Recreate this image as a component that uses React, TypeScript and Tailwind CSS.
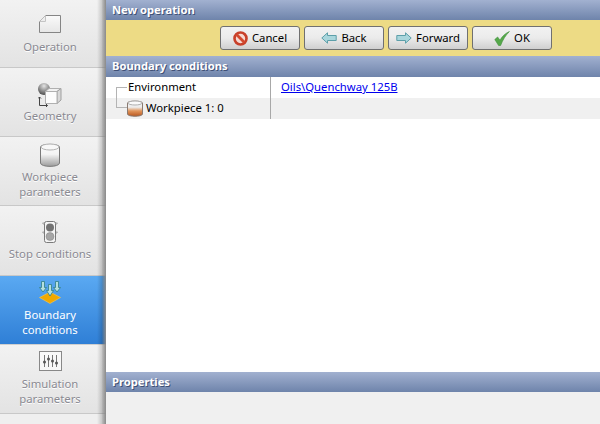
import React from 'react';

const font = { fontFamily: '"Noto Sans", "Liberation Sans", sans-serif' };

const OperationIcon = () => (
  <svg width="22" height="18" viewBox="0 0 22 18" className="block">
    <defs>
      <linearGradient id="sheet" x1="0" y1="0" x2="0" y2="1">
        <stop offset="0" stopColor="#fafafa" />
        <stop offset="1" stopColor="#e6e6e6" />
      </linearGradient>
    </defs>
    <path d="M6.5 0.5H21.5V17.5H0.5V6.5Z" fill="url(#sheet)" stroke="#858585" />
    <path d="M0.5 6.5H6.5V0.5" fill="#ededed" stroke="#c4c4c4" />
  </svg>
);

const GeometryIcon = () => (
  <svg width="24" height="24" viewBox="0 0 24 24" className="block">
    <defs>
      <radialGradient id="ball" cx="0.5" cy="0.25" r="0.75">
        <stop offset="0" stopColor="#e4e4e4" />
        <stop offset="1" stopColor="#4c4c4c" />
      </radialGradient>
    </defs>
    <circle cx="6" cy="6" r="6" fill="url(#ball)" />
    <path d="M7.5 8.5L11 5.5H23L19 8.5Z" fill="#f2f2f2" stroke="#b0b0b0" strokeLinejoin="round" />
    <path d="M19 8.5L23 5.5V17L19 20.5Z" fill="#d8d8d8" stroke="#a0a0a0" strokeLinejoin="round" />
    <rect x="7.5" y="8.5" width="11.5" height="12" fill="#fcfcfc" stroke="#b0b0b0" />
    <path d="M1.5 14V22.5H9.5M0 15.5L1.5 14L3 15.5M8 21L9.5 22.5L8 24" stroke="#444" fill="none" />
  </svg>
);

const WorkpieceIcon = () => (
  <svg width="20" height="24" viewBox="0 0 20 24" className="block">
    <defs>
      <linearGradient id="cyl" x1="0" y1="0" x2="0" y2="1">
        <stop offset="0" stopColor="#fafafa" />
        <stop offset="0.45" stopColor="#f4f4f4" />
        <stop offset="1" stopColor="#9c9c9c" />
      </linearGradient>
    </defs>
    <path d="M0.5 4C0.5 0.5 19.5 0.5 19.5 4V20C19.5 24.5 0.5 24.5 0.5 20Z" fill="url(#cyl)" stroke="#7a7a7a" />
    <ellipse cx="10" cy="4" rx="9" ry="3" fill="#f8f8f8" stroke="#b4b4b4" />
  </svg>
);

const TrafficIcon = () => (
  <svg width="16" height="22" viewBox="0 0 16 22" className="block">
    <path d="M0.5 2H3V4.5ZM15.5 2H13V4.5ZM0.5 11H3V13.5ZM15.5 11H13V13.5Z" fill="#eeeeee" stroke="#8a8a8a" strokeWidth="0.7" />
    <rect x="2.5" y="0.5" width="11" height="21" rx="2" fill="#f4f4f4" stroke="#7a7a7a" />
    <circle cx="8" cy="6.5" r="4" fill="#737373" />
    <circle cx="8" cy="15.5" r="4" fill="#a6a6a6" stroke="#808080" strokeWidth="0.5" />
  </svg>
);

const BoundaryIcon = () => (
  <svg width="22" height="23" viewBox="0 0 22 23" className="block">
    <path d="M0.5 16.5L11 11L21.5 16.5L11 22.5Z" fill="#f2a900" stroke="#f8cb55" strokeWidth="0.6" />
    <g fill="#b5e0df" stroke="#2f7f86" strokeWidth="0.8">
      <path d="M2.5 0.5H5.5V6.5H7.5L4 11L0.5 6.5H2.5Z" />
      <path d="M9.5 3.5H12.5V9.5H14.5L11 15L7.5 9.5H9.5Z" />
      <path d="M16.5 0.5H19.5V6.5H21.5L18 11L14.5 6.5H16.5Z" />
    </g>
  </svg>
);

const SimulationIcon = () => (
  <svg width="23" height="20" viewBox="0 0 23 20" className="block">
    <rect x="0.5" y="0.5" width="22" height="19" fill="#f8f8f8" stroke="#888888" />
    <path d="M5.5 4V16M9.5 4V16M13.5 4V16M17.5 4V16" stroke="#777777" />
    <g fill="#555555">
      <circle cx="5.5" cy="11" r="1.5" />
      <circle cx="9.5" cy="8" r="1.5" />
      <circle cx="13.5" cy="10" r="1.5" />
      <circle cx="17.5" cy="12" r="1.5" />
    </g>
  </svg>
);

const CancelIcon = () => (
  <svg width="15" height="15" viewBox="0 0 16 16" className="block">
    <circle cx="8" cy="8" r="6.4" fill="#f6d9d2" stroke="#c8402a" strokeWidth="2.8" />
    <path d="M3.8 3.8L12.2 12.2" stroke="#d2492f" strokeWidth="3" />
  </svg>
);

const ArrowIcon = ({ flip }: { flip?: boolean }) => (
  <svg width="16" height="12" viewBox="0 0 16 12" className={flip ? 'block scale-x-[-1]' : 'block'}>
    <path d="M0.8 6L6.5 0.8V3.5H15.2V8.5H6.5V11.2Z" fill="#a9d6dc" stroke="#5d9fa9" />
  </svg>
);

const CheckIcon = () => (
  <svg width="16" height="15" viewBox="0 0 16 15" className="block">
    <path d="M0.8 8.5L3.6 6L6 9.2C8 5.5 11 2.5 15.4 0.5C11.5 4.5 8.8 8.8 6.6 14.5H4.6Z" fill="#55a84a" stroke="#3f8f3a" strokeWidth="0.6" />
  </svg>
);

const navItems = [
  { label: ['Operation'], icon: <OperationIcon />, h: 'h-[68px]', top: 'pt-[15px]', gap: 'mt-[6px]' },
  { label: ['Geometry'], icon: <GeometryIcon />, h: 'h-[69px]', top: 'pt-[15px]', gap: 'mt-[1px]' },
  { label: ['Workpiece', 'parameters'], icon: <WorkpieceIcon />, h: 'h-[69px]', top: 'pt-[6px]', gap: 'mt-[2px]' },
  { label: ['Stop conditions'], icon: <TrafficIcon />, h: 'h-[70px]', top: 'pt-[15px]', gap: 'mt-[3px]' },
  { label: ['Boundary', 'conditions'], icon: <BoundaryIcon />, h: 'h-[69px]', top: 'pt-[5px]', gap: 'mt-[3px]', active: true },
  { label: ['Simulation', 'parameters'], icon: <SimulationIcon />, h: 'h-[69px]', top: 'pt-[6px]', gap: 'mt-[5px]' },
];

const SectionBar = ({ children, tall }: { children: React.ReactNode; tall?: boolean }) => (
  <div
    className={`${tall ? 'h-[21px]' : 'h-5'} flex items-center pl-[6px] bg-gradient-to-b from-[#a2b1d0] to-[#6f84ab] text-white text-[11.2px] font-bold [text-shadow:1px_1px_0_#3f5076]`}
  >
    {children}
  </div>
);

const ToolButton = ({ icon, label }: { icon: React.ReactNode; label: string }) => (
  <button className="w-20 h-6 flex items-center justify-center gap-[4px] rounded-[3px] border border-[#707070] bg-gradient-to-b from-[#f2f2f2] via-[#ebebeb] to-[#cfcfcf] text-[11.3px] text-black">
    {icon}
    <span>{label}</span>
  </button>
);

export default function App() {
  return (
    <div className="w-[600px] h-[424px] flex overflow-hidden bg-white" style={font}>
      <div className="w-[106px] shrink-0 relative flex flex-col bg-[#efefef]">
        {navItems.map((item) => (
          <div
            key={item.label[0]}
            className={`${item.h} ${item.top} pr-[6px] flex flex-col items-center border-b text-[11.3px] leading-[15px] ${
              item.active
                ? 'bg-gradient-to-b from-[#5aa9f2] to-[#2f7fd6] text-white border-b-[#cfcfcf]'
                : 'bg-gradient-to-b from-[#f2f2f2] to-[#e3e3e3] text-[#8a8a92] border-b-[#c8c8c8] [text-shadow:0_1px_0_#ffffff]'
            }`}
          >
            {item.icon}
            <div className={`${item.gap} text-center`}>
              {item.label.map((line) => (
                <div key={line}>{line}</div>
              ))}
            </div>
          </div>
        ))}
        <div className="absolute right-0 top-0 bottom-0 w-[9px] bg-gradient-to-r from-black/0 via-black/15 to-[#8a8a8a]" />
      </div>

      <div className="flex-1 flex flex-col min-w-0">
        <SectionBar>New operation</SectionBar>
        <div className="h-[36px] bg-[#eddb85] flex items-center justify-end pr-[48px] gap-[4px]">
          <ToolButton icon={<CancelIcon />} label="Cancel" />
          <ToolButton icon={<ArrowIcon />} label="Back" />
          <ToolButton icon={<ArrowIcon flip />} label="Forward" />
          <ToolButton icon={<CheckIcon />} label="OK" />
        </div>
        <SectionBar tall>Boundary conditions</SectionBar>

        <div className="flex-1 text-[11.3px] text-black">
          <div className="h-[21px] flex">
            <div className="w-[165px] border-r border-r-[#a8a8a8] flex items-center relative pl-[22px]">
              <div className="absolute left-[10px] top-[10px] h-[21px] w-[11px] border-l border-t border-[#b4b4b4]" />
              Environment
            </div>
            <div className="flex-1 flex items-center pl-[10px]">
              <a href="#" className="text-[#0000ee] underline">Oils\Quenchway 125B</a>
            </div>
          </div>
          <div className="h-[21px] flex bg-[#f0f0f0]">
            <div className="w-[165px] border-r border-r-[#a8a8a8] flex items-center relative pl-[21px] gap-[3px]">
              <div className="absolute left-[10px] top-0 h-[10px] w-[11px] border-l border-b border-[#b4b4b4]" />
              <svg width="16" height="17" viewBox="0 0 16 17" className="block relative">
                <defs>
                  <linearGradient id="wp" x1="0" y1="0" x2="0" y2="1">
                    <stop offset="0" stopColor="#f4f4f4" />
                    <stop offset="0.4" stopColor="#ececec" />
                    <stop offset="0.65" stopColor="#e0945a" />
                    <stop offset="1" stopColor="#b8561f" />
                  </linearGradient>
                </defs>
                <path d="M0.5 3C0.5 0.5 15.5 0.5 15.5 3V14C15.5 17 0.5 17 0.5 14Z" fill="url(#wp)" stroke="#8a7a70" />
                <ellipse cx="8" cy="3" rx="7" ry="2" fill="#fafafa" stroke="#b0b0b0" />
              </svg>
              Workpiece 1: 0
            </div>
            <div className="flex-1" />
          </div>
        </div>

        <SectionBar>Properties</SectionBar>
        <div className="h-[32px] bg-[#f0f0f0]" />
      </div>
    </div>
  );
}
